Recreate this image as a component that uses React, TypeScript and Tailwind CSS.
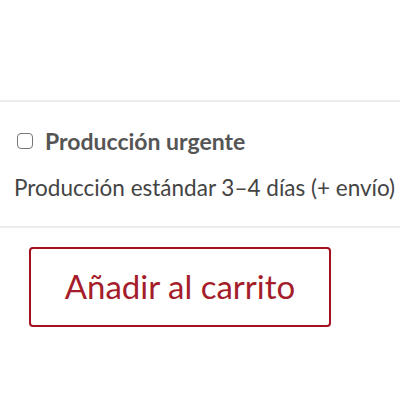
import { useState } from 'react';

export default function App() {
    const [urgent, setUrgent] = useState(false);

    return (
        <div className="w-[400px] h-[400px] overflow-hidden bg-white" style={{ fontFamily: 'Lato, "Noto Sans", sans-serif' }}>
            <div className="h-[100px]" />
            <div className="border-t-2 border-b-2 border-[#ececec] pl-[14px] pt-[25px] pb-[24px]">
                <label className="flex items-center gap-[12px] pl-[3px] h-[28px] text-[23px] leading-[28px] font-bold text-[#555]">
                    <input
                        type="checkbox"
                        checked={urgent}
                        onChange={(e) => setUrgent(e.target.checked)}
                        className="appearance-none w-[16px] h-[16px] m-0 border-[1.5px] border-[#767676] rounded-[4px] bg-white checked:bg-[#555]"
                    />
                    Producción urgente
                </label>
                <p className="mt-[19px] text-[22.5px] leading-[28px] text-[#444] whitespace-nowrap">
                    Producción estándar 3–4 días (+ envío)
                </p>
            </div>
            <div className="pl-[29px] pt-[19px]">
                <button className="w-[302px] h-[80px] border-2 border-[#a3101f] rounded-[4px] text-[33px] text-[#a51d2b] bg-white">
                    Añadir al carrito
                </button>
            </div>
        </div>
    );
}
